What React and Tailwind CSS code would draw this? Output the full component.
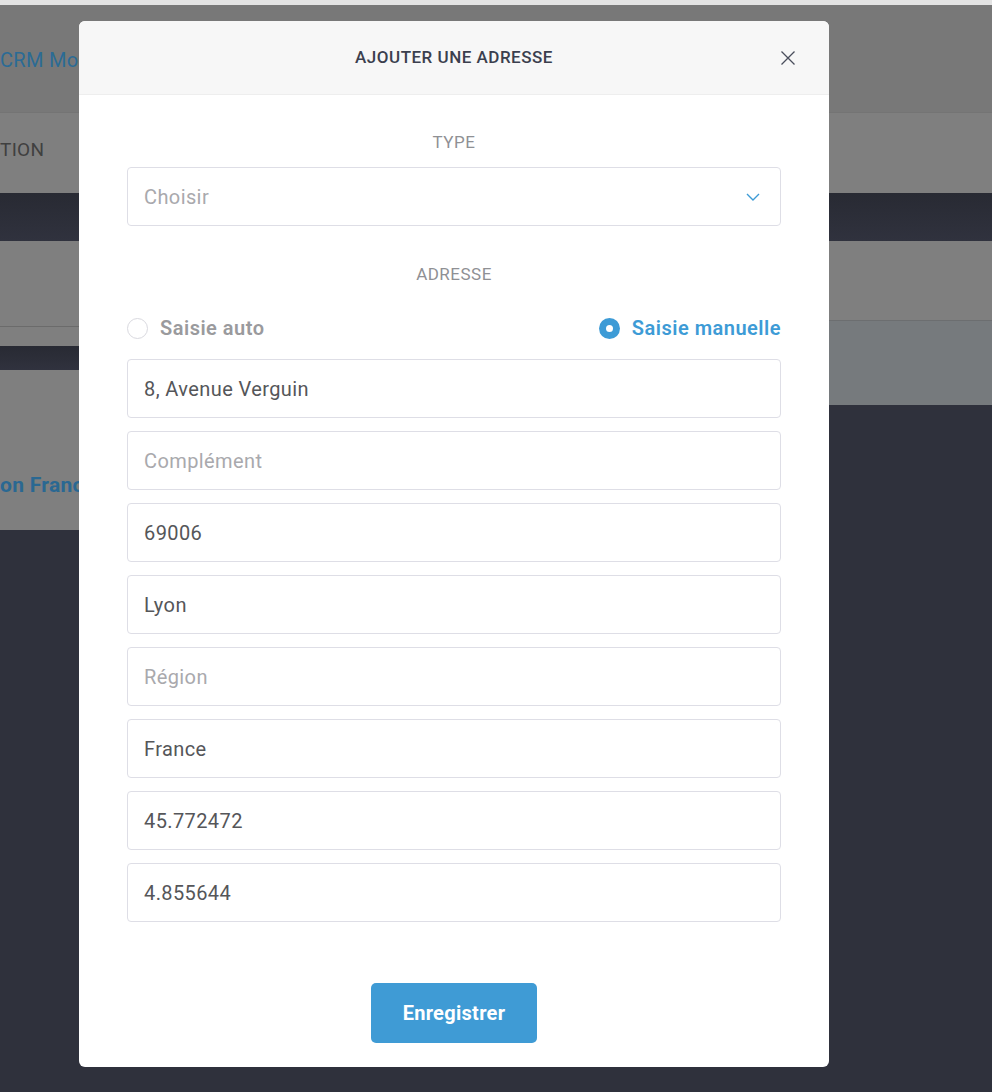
import React from "react";

const font = { fontFamily: "Roboto, 'Liberation Sans', sans-serif" };

const Field = ({ value, placeholder }) => (
  <div className="h-[59px] w-full rounded-[4px] border border-[#dedee6] bg-white px-4 flex items-center">
    {value ? (
      <span className="text-[20px] tracking-[0.4px] text-[#555659]">{value}</span>
    ) : (
      <span className="text-[20px] tracking-[0.4px] text-[#a9a9ad]">{placeholder}</span>
    )}
  </div>
);

const App = () => {
  const fields = [
    { value: "8, Avenue Verguin" },
    { placeholder: "Complément" },
    { value: "69006" },
    { value: "Lyon" },
    { placeholder: "Région" },
    { value: "France" },
    { value: "45.772472" },
    { value: "4.855644" },
  ];

  return (
    <div className="relative w-[992px] h-[1092px] overflow-hidden bg-[#2f313c]" style={font}>
      {/* page behind the modal */}
      <div className="h-[5px] bg-[#e3e3e3]" />
      <div className="h-[107px] bg-[#787878] flex items-center">
        <span className="mt-[3px] text-[20px] tracking-[0.3px] text-[#2b6b95]">CRM Mobile</span>
      </div>
      <div className="h-[81px] bg-[#7f7f7f] flex items-center border-t border-[#747474]">
        <span className="-mt-[6px] text-[19px] tracking-[0.3px] text-[#404040]">TION</span>
      </div>
      <div className="h-[48px] bg-gradient-to-b from-[#282a33] to-[#30323e]" />
      <div className="flex">
        <div className="w-[500px] flex flex-col">
          <div className="h-[105px] bg-[#7f7f7f] flex flex-col">
            <div className="h-[86px] border-b border-[#6b6b6b]" />
          </div>
          <div className="h-[24px] bg-gradient-to-b from-[#282a33] to-[#30323e]" />
          <div className="h-[160px] bg-[#7f7f7f] flex items-end pb-[29px]">
            <span className="text-[21px] font-bold tracking-[0.3px] text-[#2a6892]">on France</span>
          </div>
        </div>
        <div className="flex-1 flex flex-col">
          <div className="h-[79px] bg-[#7f7f7f]" />
          <div className="h-[85px] bg-[#767a7d] border-t border-[#6c6e70]" />
        </div>
      </div>

      {/* modal */}
      <div className="absolute left-[79px] top-[21px] w-[750px] h-[1046px] rounded-[6px] bg-white overflow-hidden flex flex-col">
        <div className="relative h-[74px] shrink-0 bg-[#f7f7f7] border-b border-[#eeeeee] flex items-center justify-center">
          <h2 className="text-[17px] font-medium tracking-[0.5px] text-[#3b3f4e]">AJOUTER UNE ADRESSE</h2>
          <button className="absolute right-[33px] top-[29px] w-[16px] h-[16px] text-[#4a4e5c]">
            <svg viewBox="0 0 16 16" width="16" height="16" fill="none" stroke="currentColor" strokeWidth="1.3">
              <path d="M1.5 1.5 L14.5 14.5 M14.5 1.5 L1.5 14.5" />
            </svg>
          </button>
        </div>

        <div className="px-12 pt-[37px] flex flex-col">
          <p className="text-center text-[17px] leading-[20px] tracking-[0.5px] text-[#8f9094]">TYPE</p>
          <div className="mt-[15px] h-[59px] rounded-[4px] border border-[#dedee6] px-4 flex items-center justify-between">
            <span className="text-[20px] tracking-[0.4px] text-[#a9a9ad]">Choisir</span>
            <svg width="14" height="8" viewBox="0 0 14 8" fill="none" stroke="#3d9bd6" strokeWidth="1.4" className="mr-[4px]">
              <path d="M1 1 L7 7 L13 1" />
            </svg>
          </div>

          <p className="mt-[38px] text-center text-[17px] leading-[20px] tracking-[0.5px] text-[#8f9094]">ADRESSE</p>

          <div className="mt-[32px] h-[24px] flex items-center justify-between">
            <label className="flex items-center gap-[12px]">
              <span className="w-[21px] h-[21px] rounded-full border border-[#d9d9df] bg-white" />
              <span className="text-[20px] font-semibold tracking-[0.5px] text-[#9a9a9d]">Saisie auto</span>
            </label>
            <label className="flex items-center gap-[12px]">
              <span className="w-[21px] h-[21px] rounded-full bg-[#3d9bd6] flex items-center justify-center">
                <span className="w-[7px] h-[7px] rounded-full bg-white" />
              </span>
              <span className="text-[20px] font-semibold tracking-[0.5px] text-[#3d9bd6]">Saisie manuelle</span>
            </label>
          </div>

          <div className="mt-[19px] flex flex-col gap-[13px]">
            {fields.map((f, i) => (
              <Field key={i} value={f.value} placeholder={f.placeholder} />
            ))}
          </div>

          <div className="mt-[61px] flex justify-center">
            <button className="h-[60px] w-[166px] rounded-[5px] bg-[#3f9bd5] text-white text-[20px] font-bold tracking-[0.3px]">
              Enregistrer
            </button>
          </div>
        </div>
      </div>
    </div>
  );
};

export default App;
